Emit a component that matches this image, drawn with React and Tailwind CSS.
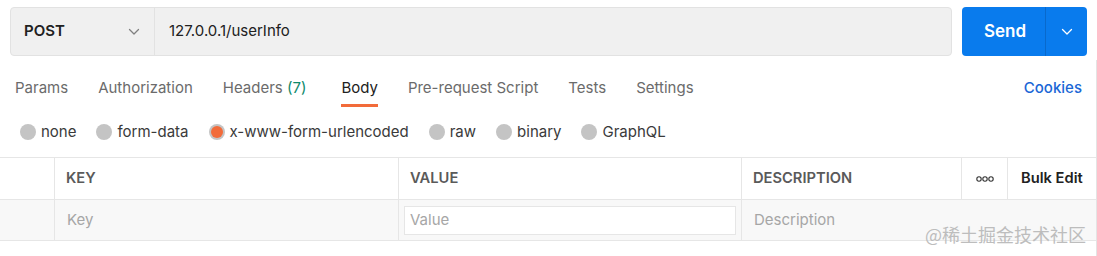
import React from "react";

function Chevron({ className }) {
  return (
    <svg className={className} width="12" height="8" viewBox="0 0 12 8" fill="none">
      <path d="M1.5 1.5 L6 6 L10.5 1.5" stroke="currentColor" strokeWidth="1.3" strokeLinecap="round" strokeLinejoin="round" />
    </svg>
  );
}

function Radio({ label, selected }) {
  return (
    <div className="flex items-center gap-[5px]">
      {selected ? (
        <span className="w-4 h-4 rounded-full bg-[#c4c4c4] flex items-center justify-center">
          <span className="w-3 h-3 rounded-full bg-[#f26b3a]" />
        </span>
      ) : (
        <span className="w-4 h-4 rounded-full bg-[#c4c4c4]" />
      )}
      <span className="text-[15px] text-[#3a3a3a]">{label}</span>
    </div>
  );
}

export default function App() {
  const tabs = [
    { t: "Params" },
    { t: "Authorization" },
    { t: "Headers", extra: " (7)" },
    { t: "Body", active: true },
    { t: "Pre-request Script" },
    { t: "Tests" },
    { t: "Settings" },
  ];
  return (
    <div className="w-[1097px] h-[256px] bg-white relative overflow-hidden" style={{ fontFamily: "Inter, 'Noto Sans CJK SC', sans-serif" }}>
      {/* URL bar */}
      <div className="flex pt-[7px] pl-[10px] pr-[10px] gap-[10px]">
        <div className="flex flex-1 h-[49px] bg-[#f0f0f0] border border-[#e2e2e2] rounded-[4px]">
          <div className="w-[144px] flex items-center justify-between pl-[13px] pr-[14px] border-r border-[#e2e2e2]">
            <span className="text-[15px] font-semibold text-[#212121]">POST</span>
            <Chevron className="text-[#808080]" />
          </div>
          <div className="flex items-center pl-[14px] text-[15px] text-[#212121]">127.0.0.1/userInfo</div>
        </div>
        <div className="flex w-[125px] h-[49px] bg-[#097bed] rounded-[4px] text-white">
          <div className="w-[84px] flex items-center justify-center pl-[3px] text-[17px] font-semibold border-r border-[#0869cc]">Send</div>
          <div className="flex-1 flex items-center justify-center">
            <Chevron className="text-white" />
          </div>
        </div>
      </div>
      <div className="border-r border-[#e4e4e4] h-[200px] absolute right-0 top-[60px]" />
      {/* Tabs */}
      <div className="flex items-start justify-between pl-[15px] pr-[15px] mt-[22px] h-[30px]">
        <div className="flex gap-[30px]">
          {tabs.map((x) => (
            <div key={x.t} className={"flex flex-col items-center " + (x.active ? "ml-[5px]" : "")}>
              <span className={"text-[15px] leading-[20px] " + (x.active ? "text-[#212121]" : "text-[#6b6b6b]")}>
                {x.t}
                {x.extra && <span className="text-[#0d8a6b]">{x.extra}</span>}
              </span>
              {x.active && <span className="mt-[6px] h-[3px] w-full bg-[#f26b3a]" />}
            </div>
          ))}
        </div>
        <span className="text-[15px] leading-[20px] font-medium text-[#1a67d6]">Cookies</span>
      </div>
      {/* Radios */}
      <div className="flex items-center gap-[20px] pl-[20px] mt-[9px] h-[30px]">
        <Radio label="none" />
        <Radio label="form-data" />
        <Radio label="x-www-form-urlencoded" selected />
        <Radio label="raw" />
        <Radio label="binary" />
        <Radio label="GraphQL" />
      </div>
      {/* Table */}
      <div className="mt-[10px] border-t border-b border-[#e6e6e6]">
        <div className="flex h-[42px] border-b border-[#e6e6e6] text-[14.7px] font-semibold text-[#5a5a5a]">
          <div className="w-[55px] border-r border-[#e6e6e6]" />
          <div className="w-[344px] border-r border-[#e6e6e6] flex items-center pl-[11px]">KEY</div>
          <div className="w-[343px] border-r border-[#e6e6e6] flex items-center pl-[11px]">VALUE</div>
          <div className="w-[220px] border-r border-[#e6e6e6] flex items-center pl-[11px]">DESCRIPTION</div>
          <div className="w-[46px] border-r border-[#e6e6e6] flex items-center justify-center">
            <svg width="18" height="6" viewBox="0 0 18 6" fill="none">
              <circle cx="3" cy="3" r="2.2" stroke="#333" strokeWidth="1.1" />
              <circle cx="9" cy="3" r="2.2" stroke="#333" strokeWidth="1.1" />
              <circle cx="15" cy="3" r="2.2" stroke="#333" strokeWidth="1.1" />
            </svg>
          </div>
          <div className="flex-1 flex items-center pl-[13px] text-[#212121]">Bulk Edit</div>
        </div>
        <div className="flex h-[40px] bg-[#f8f8f8] text-[15px] text-[#a6a6a6]">
          <div className="w-[55px] border-r border-[#e6e6e6]" />
          <div className="w-[344px] border-r border-[#e6e6e6] flex items-center pl-[12px]">Key</div>
          <div className="w-[343px] border-r border-[#e6e6e6] flex items-center px-[5px]">
            <div className="w-full h-[29px] bg-white border border-[#e6e6e6] flex items-center pl-[5px]">Value</div>
          </div>
          <div className="flex-1 flex items-center pl-[12px]">Description</div>
        </div>
      </div>
      <div className="absolute left-[925px] top-[222px] text-[18px] leading-[24px] text-[#bdbdbd] whitespace-nowrap" style={{ fontFamily: "'Noto Sans CJK SC', sans-serif" }}>
        @稀土掘金技术社区
      </div>
    </div>
  );
}
